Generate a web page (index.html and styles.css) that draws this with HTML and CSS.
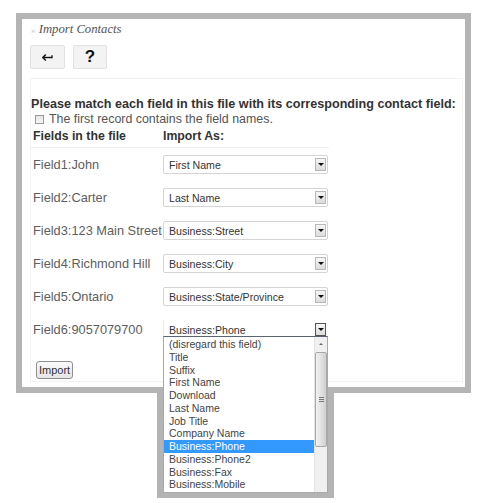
FILE: index.html
```html
<!DOCTYPE html>
<html lang="en">
<head>
<meta charset="utf-8">
<title>Import Contacts</title>
<link rel="stylesheet" href="styles.css">
</head>
<body>
<div class="window">
  <div class="crumb"><span class="raquo">»</span> Import Contacts</div>
  <div class="toolbar">
    <button class="tool" type="button" aria-label="Back">
      <svg width="11" height="7" viewBox="0 0 11 7" aria-hidden="true">
        <path d="M1.2 3.5H10" stroke="#111" stroke-width="1.4" fill="none"/>
        <path d="M3.8 0.6L0.8 3.5L3.8 6.4" stroke="#111" stroke-width="1.4" fill="none"/>
        <path d="M10 1.2V4.2" stroke="#111" stroke-width="1.3" fill="none"/>
      </svg>
    </button>
    <button class="tool help" type="button">?</button>
  </div>
  <div class="content">
    <div class="prompt">Please match each field in this file with its corresponding contact field:</div>
    <label class="check"><span class="box"></span>The first record contains the field names.</label>
    <div class="map">
      <div class="map-head"><span>Fields in the file</span><span>Import As:</span></div>
      <div class="map-row"><span class="src">Field1:John</span><div class="select"><span>First Name</span><i class="drop"></i></div></div>
      <div class="map-row"><span class="src">Field2:Carter</span><div class="select"><span>Last Name</span><i class="drop"></i></div></div>
      <div class="map-row"><span class="src">Field3:123 Main Street</span><div class="select"><span>Business:Street</span><i class="drop"></i></div></div>
      <div class="map-row"><span class="src">Field4:Richmond Hill</span><div class="select"><span>Business:City</span><i class="drop"></i></div></div>
      <div class="map-row"><span class="src">Field5:Ontario</span><div class="select"><span>Business:State/Province</span><i class="drop"></i></div></div>
      <div class="map-row"><span class="src">Field6:9057079700</span>
        <div class="select open"><span>Business:Phone</span><i class="drop"></i>
          <div class="list-frame"></div>
          <div class="list">
            <ul class="options">
              <li>(disregard this field)</li>
              <li>Title</li>
              <li>Suffix</li>
              <li>First Name</li>
              <li>Download</li>
              <li>Last Name</li>
              <li>Job Title</li>
              <li>Company Name</li>
              <li class="hl">Business:Phone</li>
              <li>Business:Phone2</li>
              <li>Business:Fax</li>
              <li>Business:Mobile</li>
            </ul>
            <div class="scroll">
              <div class="scroll-up"></div>
              <div class="thumb"><span class="grip"></span></div>
            </div>
          </div>
        </div>
      </div>
    </div>
    <button class="import" type="button">Import</button>
  </div>
</div>
</body>
</html>
```

FILE: styles.css
```css
html {
  margin: 0;
  padding: 0;
}

body {
  margin: 0;
  padding: 13px 0 0 16px;
  min-height: 503px;
  box-sizing: border-box;
  background: #fff;
  font-family: "Liberation Sans", Arial, sans-serif;
  color: #333;
}

.window {
  width: 433px;
  height: 368px;
  border: 6px solid #b4b4b4;
  background: #fff;
  padding: 0 2px 0 8px;
}

.crumb {
  height: 20px;
  line-height: 20px;
  padding-left: 1px;
  font-family: "Liberation Serif", "Times New Roman", serif;
  font-style: italic;
  font-size: 12.7px;
  color: #555;
}

.raquo {
  font-style: normal;
  color: #c4c4c4;
  font-size: 9px;
}

.toolbar {
  display: flex;
  gap: 8px;
  margin-top: 6px;
}

.tool {
  width: 35px;
  height: 24px;
  margin: 0;
  padding: 0;
  border: 1px solid #e2e2e2;
  border-radius: 2px;
  background: #f3f3f3;
  display: flex;
  align-items: center;
  justify-content: center;
}

.tool.help {
  width: 34px;
  font-family: "Liberation Sans", Arial, sans-serif;
  font-weight: bold;
  font-size: 17px;
  color: #111;
}

.content {
  margin-top: 9px;
  height: 304px;
  border: 1px solid #f3f3f3;
  padding: 19px 0 0 0;
  box-sizing: border-box;
}

.prompt {
  font-weight: bold;
  font-size: 12.6px;
  line-height: 12px;
  color: #333;
  white-space: nowrap;
}

.check {
  display: flex;
  align-items: center;
  margin-top: 3px;
  height: 12px;
  line-height: 12px;
  font-size: 12.4px;
  color: #555;
  padding-left: 4px;
}

.box {
  width: 7px;
  height: 7px;
  border: 1px solid #9a9a9a;
  background: linear-gradient(#e6e6e6, #f7f7f7);
  margin-right: 5px;
}

.map {
  width: 298px;
}

.map-head {
  display: grid;
  grid-template-columns: 132px 165px;
  margin-top: 4px;
  font-weight: bold;
  font-size: 12.3px;
  line-height: 14px;
  color: #333;
  padding: 0 0 4px 2px;
  border-bottom: 1px solid #eeeeee;
}

.map-head span + span {
  margin-left: -2px;
}

.map-row {
  display: grid;
  grid-template-columns: 130px 165px;
  align-items: center;
  height: 33px;
  padding-left: 2px;
}

.src {
  font-size: 12.8px;
  color: #5e5e5e;
  white-space: nowrap;
}

.select {
  position: relative;
  height: 19px;
  box-sizing: border-box;
  border: 1px solid #d4d4d4;
  border-radius: 2px;
  display: flex;
  align-items: center;
  padding-left: 5px;
  font-size: 10.6px;
  color: #333;
  background: #fff;
}

.drop {
  position: absolute;
  right: 1px;
  top: 2px;
  width: 11px;
  height: 13px;
  border: 1px solid #b8b8b8;
  background: linear-gradient(#f6f6f6, #dcdcdc);
  box-sizing: border-box;
}

.drop::after {
  content: "";
  position: absolute;
  left: 2px;
  top: 4px;
  border-left: 3px solid transparent;
  border-right: 3px solid transparent;
  border-top: 3px solid #111;
}

.select.open {
  border-color: #fff #fff #fff #eaeaea;
  border-radius: 0;
}

.select.open .drop {
  border-color: #555;
}

/* grey outline that surrounds the open option list below the window */
.list-frame {
  position: absolute;
  z-index: -1;
  left: -7px;
  right: -7px;
  top: 40px;
  height: 137px;
  background: #b4b4b4;
}

.list {
  position: absolute;
  z-index: 2;
  left: -1px;
  top: 15px;
  width: 165px;
  height: 157px;
  box-sizing: border-box;
  border: 1px solid #a9a9a9;
  border-top: 1px solid #5b6470;
  background: #fff;
  display: flex;
}

.options {
  list-style: none;
  margin: 0;
  padding: 1px 0 0 0;
  flex: 1;
  font-size: 10.5px;
  color: #444;
}

.options li {
  height: 12.75px;
  line-height: 12.75px;
  padding-left: 5px;
  white-space: nowrap;
}

.options li.hl {
  background: #3399ff;
  color: #fff;
}

.scroll {
  width: 12px;
  background: #f0f0f0;
  border-left: 1px solid #e4e4e4;
  display: flex;
  flex-direction: column;
}

.scroll-up {
  height: 15px;
  position: relative;
}

.scroll-up::after {
  content: "";
  position: absolute;
  left: 4px;
  top: 6px;
  border-left: 2px solid transparent;
  border-right: 2px solid transparent;
  border-bottom: 2px solid #666;
}

.thumb {
  height: 95px;
  border: 1px solid #a8a8a8;
  border-radius: 2px;
  background: linear-gradient(90deg, #f2f2f2, #e2e2e2 50%, #d0d0d0);
  box-sizing: border-box;
  display: flex;
  align-items: center;
  justify-content: center;
}

.grip {
  width: 5px;
  height: 5px;
  background: repeating-linear-gradient(#777 0 1px, transparent 1px 2px);
}

.import {
  display: block;
  margin: 15px 0 0 5px;
  height: 18px;
  padding: 0 2px;
  font-family: "Liberation Sans", Arial, sans-serif;
  font-size: 11px;
  color: #333;
  border: 1px solid #8f8f8f;
  border-radius: 3px;
  background: linear-gradient(#fafafa, #e5e5e5);
}
```
